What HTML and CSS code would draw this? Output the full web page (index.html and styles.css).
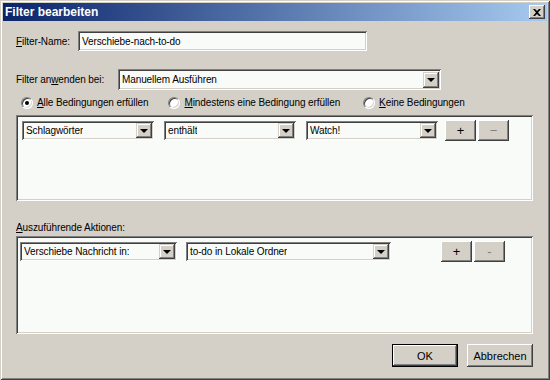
FILE: index.html
```html
<!DOCTYPE html>
<html lang="de">
<head>
<meta charset="UTF-8">
<title>Filter bearbeiten</title>
<link rel="stylesheet" href="styles.css">
</head>
<body>
<div class="window">
  <div class="titlebar">
    <span class="title">Filter bearbeiten</span>
    <span class="close">
      <svg width="8" height="7" viewBox="0 0 8 7"><path d="M0 0h2l2 2 2-2h2L5 3.5 8 7H6L4 5 2 7H0l3-3.5z" fill="#000"/></svg>
    </span>
  </div>

  <div class="content">
    <div class="row name-row">
      <label class="lbl"><u>F</u>ilter-Name:</label>
      <div class="field name-field">Verschiebe-nach-to-do</div>
    </div>

    <div class="row apply-row">
      <label class="lbl">Filter an<u>w</u>enden bei:</label>
      <div class="field combo apply-combo">
        <span class="val">Manuellem Ausführen</span>
        <span class="arrow"></span>
      </div>
    </div>

    <div class="radios">
      <div class="radio checked"><span class="dot"></span><span><u>A</u>lle Bedingungen erfüllen</span></div>
      <div class="radio"><span class="dot"></span><span><u>M</u>indestens eine Bedingung erfüllen</span></div>
      <div class="radio"><span class="dot"></span><span><u>K</u>eine Bedingungen</span></div>
    </div>

    <div class="listbox cond-box">
      <div class="item-row cond-row">
        <div class="field combo c1"><span class="val">Schlagwörter</span><span class="arrow"></span></div>
        <div class="field combo c2"><span class="val">enthält</span><span class="arrow"></span></div>
        <div class="field combo c3"><span class="val">Watch!</span><span class="arrow"></span></div>
        <button class="btn small">+</button>
        <button class="btn small dim">&minus;</button>
      </div>
    </div>

    <div class="section-label"><u>A</u>uszuführende Aktionen:</div>

    <div class="listbox action-box">
      <div class="item-row action-row">
        <div class="field combo a1"><span class="val">Verschiebe Nachricht in:</span><span class="arrow"></span></div>
        <div class="field combo a2"><span class="val">to-do in Lokale Ordner</span><span class="arrow"></span></div>
        <button class="btn small plus2">+</button>
        <button class="btn small dim">-</button>
      </div>
    </div>

    <div class="footer">
      <button class="btn big default">OK</button>
      <button class="btn big">Abbrechen</button>
    </div>
  </div>
</div>
</body>
</html>
```

FILE: styles.css
```css
body {
  margin: 0;
  font-family: "Liberation Sans", Arial, sans-serif;
  font-size: 10px;
  letter-spacing: -0.1px;
  color: #000;
  background: #d4d0c8;
}

.window {
  width: 550px;
  height: 380px;
  box-sizing: border-box;
  background: #d4d0c8;
  padding: 3px;
  box-shadow: inset 1px 1px 0 #d4d0c8, inset -1px -1px 0 #404040, inset 2px 2px 0 #fff, inset -2px -2px 0 #808080;
}

.titlebar {
  height: 18px;
  background: linear-gradient(to right, #0a246a, #a6caf0);
  display: flex;
  align-items: center;
  justify-content: space-between;
  padding: 0 2px 0 2px;
}

.title {
  color: #fff;
  font-weight: bold;
  font-size: 12px;
  letter-spacing: 0;
}

.close {
  width: 16px;
  height: 14px;
  box-sizing: border-box;
  background: #d4d0c8;
  display: flex;
  align-items: center;
  justify-content: center;
  box-shadow: inset -1px -1px 0 #404040, inset 1px 1px 0 #fff, inset -2px -2px 0 #808080;
}

.content {
  padding: 0 13px 0 13px;
}

.row {
  display: flex;
  align-items: center;
}

.name-row {
  margin-top: 10px;
}

.apply-row {
  margin-top: 18px;
}

.lbl {
  display: inline-block;
}

.name-row .lbl {
  width: 62px;
}

.apply-row .lbl {
  width: 102px;
}

.field {
  height: 20px;
  box-sizing: border-box;
  background: #f9fbf8;
  box-shadow: inset 1px 1px 0 #808080, inset -1px -1px 0 #fff, inset 2px 2px 0 #404040, inset -2px -2px 0 #d4d0c8;
  padding: 0 4px;
  display: flex;
  align-items: center;
}

.name-field {
  width: 289px;
}

.combo {
  justify-content: space-between;
  padding-right: 2px;
}

.val {
  white-space: nowrap;
  overflow: hidden;
}

.arrow {
  width: 16px;
  height: 16px;
  box-sizing: border-box;
  flex: none;
  background: #d4d0c8;
  box-shadow: inset -1px -1px 0 #404040, inset 1px 1px 0 #d4d0c8, inset -2px -2px 0 #808080, inset 2px 2px 0 #fff;
  position: relative;
}

.arrow::after {
  content: "";
  position: absolute;
  left: 4px;
  top: 6px;
  border-left: 4px solid transparent;
  border-right: 4px solid transparent;
  border-top: 4px solid #000;
}

.apply-combo {
  width: 323px;
  height: 21px;
}

.radios {
  display: flex;
  margin-top: 4px;
  padding-left: 5px;
  height: 17px;
  align-items: center;
}

.radio {
  display: flex;
  align-items: center;
  gap: 4px;
}

.radio:nth-child(2) {
  margin-left: 20px;
}

.radio:nth-child(3) {
  margin-left: 23px;
}

.dot {
  width: 12px;
  height: 12px;
  box-sizing: border-box;
  border-radius: 50%;
  background: #fff;
  border: 1px solid;
  border-color: #808080 #fff #fff #808080;
  box-shadow: inset 1px 1px 0 #404040, inset -1px -1px 0 #d4d0c8;
  position: relative;
}

.checked .dot::after {
  content: "";
  position: absolute;
  left: 3px;
  top: 3px;
  width: 4px;
  height: 4px;
  border-radius: 50%;
  background: #000;
}

.listbox {
  background: #f9fbf8;
  box-sizing: border-box;
  box-shadow: inset 1px 1px 0 #808080, inset -1px -1px 0 #fff, inset 2px 2px 0 #404040, inset -2px -2px 0 #d4d0c8;
}

.cond-box {
  margin-top: 4px;
  width: 517px;
  height: 86px;
  padding: 5px 0 0 6px;
}

.item-row {
  display: flex;
  align-items: center;
}

.c1, .c2, .c3 {
  width: 132px;
  height: 19px;
}

.c2, .c3 {
  margin-left: 10px;
}

.c1 .arrow, .c2 .arrow, .c3 .arrow {
  height: 15px;
}

.btn {
  font-family: "Liberation Sans", Arial, sans-serif;
  font-size: 10px;
  color: #000;
  background: #d4d0c8;
  border: none;
  padding: 0;
  box-shadow: inset -1px -1px 0 #404040, inset 1px 1px 0 #fff, inset -2px -2px 0 #808080;
}

.small {
  width: 31px;
  height: 21px;
  font-size: 13px;
}

.cond-row .small:first-of-type {
  margin-left: 7px;
}

.small + .small {
  margin-left: 2px;
}

.dim {
  color: #808080;
}

.section-label {
  margin-top: 21px;
}

.action-box {
  margin-top: 3px;
  width: 517px;
  height: 98px;
  padding: 5px 0 0 4px;
}

.a1 {
  width: 157px;
  height: 19px;
}

.a2 {
  width: 205px;
  height: 19px;
  margin-left: 9px;
}

.a1 .arrow, .a2 .arrow {
  height: 15px;
}

.plus2 {
  margin-left: 50px;
}

.footer {
  display: flex;
  justify-content: flex-end;
  gap: 9px;
  margin-top: 10px;
  width: 517px;
}

.big {
  width: 66px;
  height: 23px;
  font-size: 11px;
}

.default {
  box-shadow: inset 0 0 0 1px #000, inset -2px -2px 0 #404040, inset 2px 2px 0 #fff, inset -3px -3px 0 #808080;
}
```
